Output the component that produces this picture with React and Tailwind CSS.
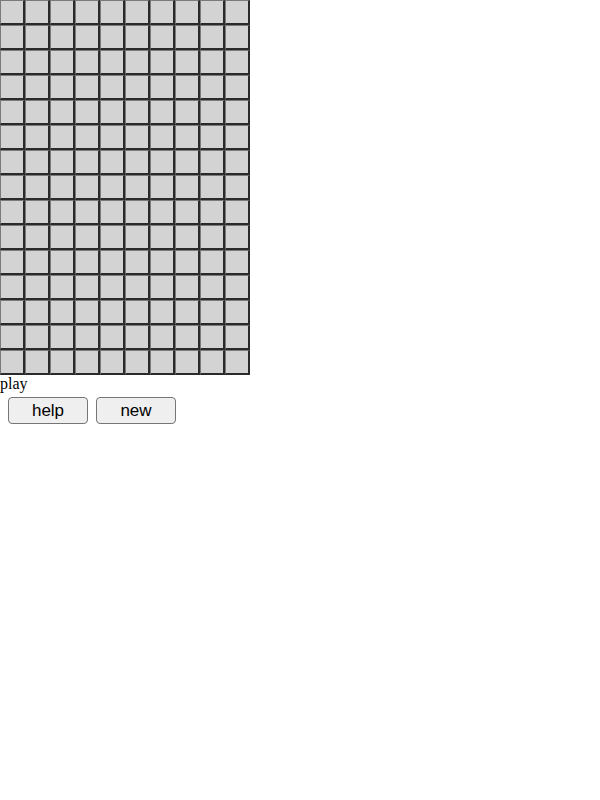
const ROWS = 15
const COLS = 10

function Cell() {
  return (
    <div className="w-[25px] h-[25px] box-border bg-[#d3d3d3] border-t border-l border-t-[#7a7a7a] border-l-[#7a7a7a] border-r-2 border-b-2 border-r-[#2a2a2a] border-b-[#2a2a2a]" />
  )
}

export default function App() {
  return (
    <div className="bg-white min-h-[800px] font-['Liberation_Serif',serif] text-black">
      <div className="grid grid-cols-[repeat(10,25px)] w-[250px]">
        {Array.from({ length: ROWS * COLS }).map((_, i) => (
          <Cell key={i} />
        ))}
      </div>
      <div className="text-[16px] leading-[18px]">play</div>
      <div className="flex gap-2 pl-2 pt-1">
        <button className="w-20 h-[27px] bg-[#efefef] border border-[#767676] rounded-[4px] font-['Liberation_Sans',sans-serif] text-[17px] leading-none">
          help
        </button>
        <button className="w-20 h-[27px] bg-[#efefef] border border-[#767676] rounded-[4px] font-['Liberation_Sans',sans-serif] text-[17px] leading-none">
          new
        </button>
      </div>
    </div>
  )
}
